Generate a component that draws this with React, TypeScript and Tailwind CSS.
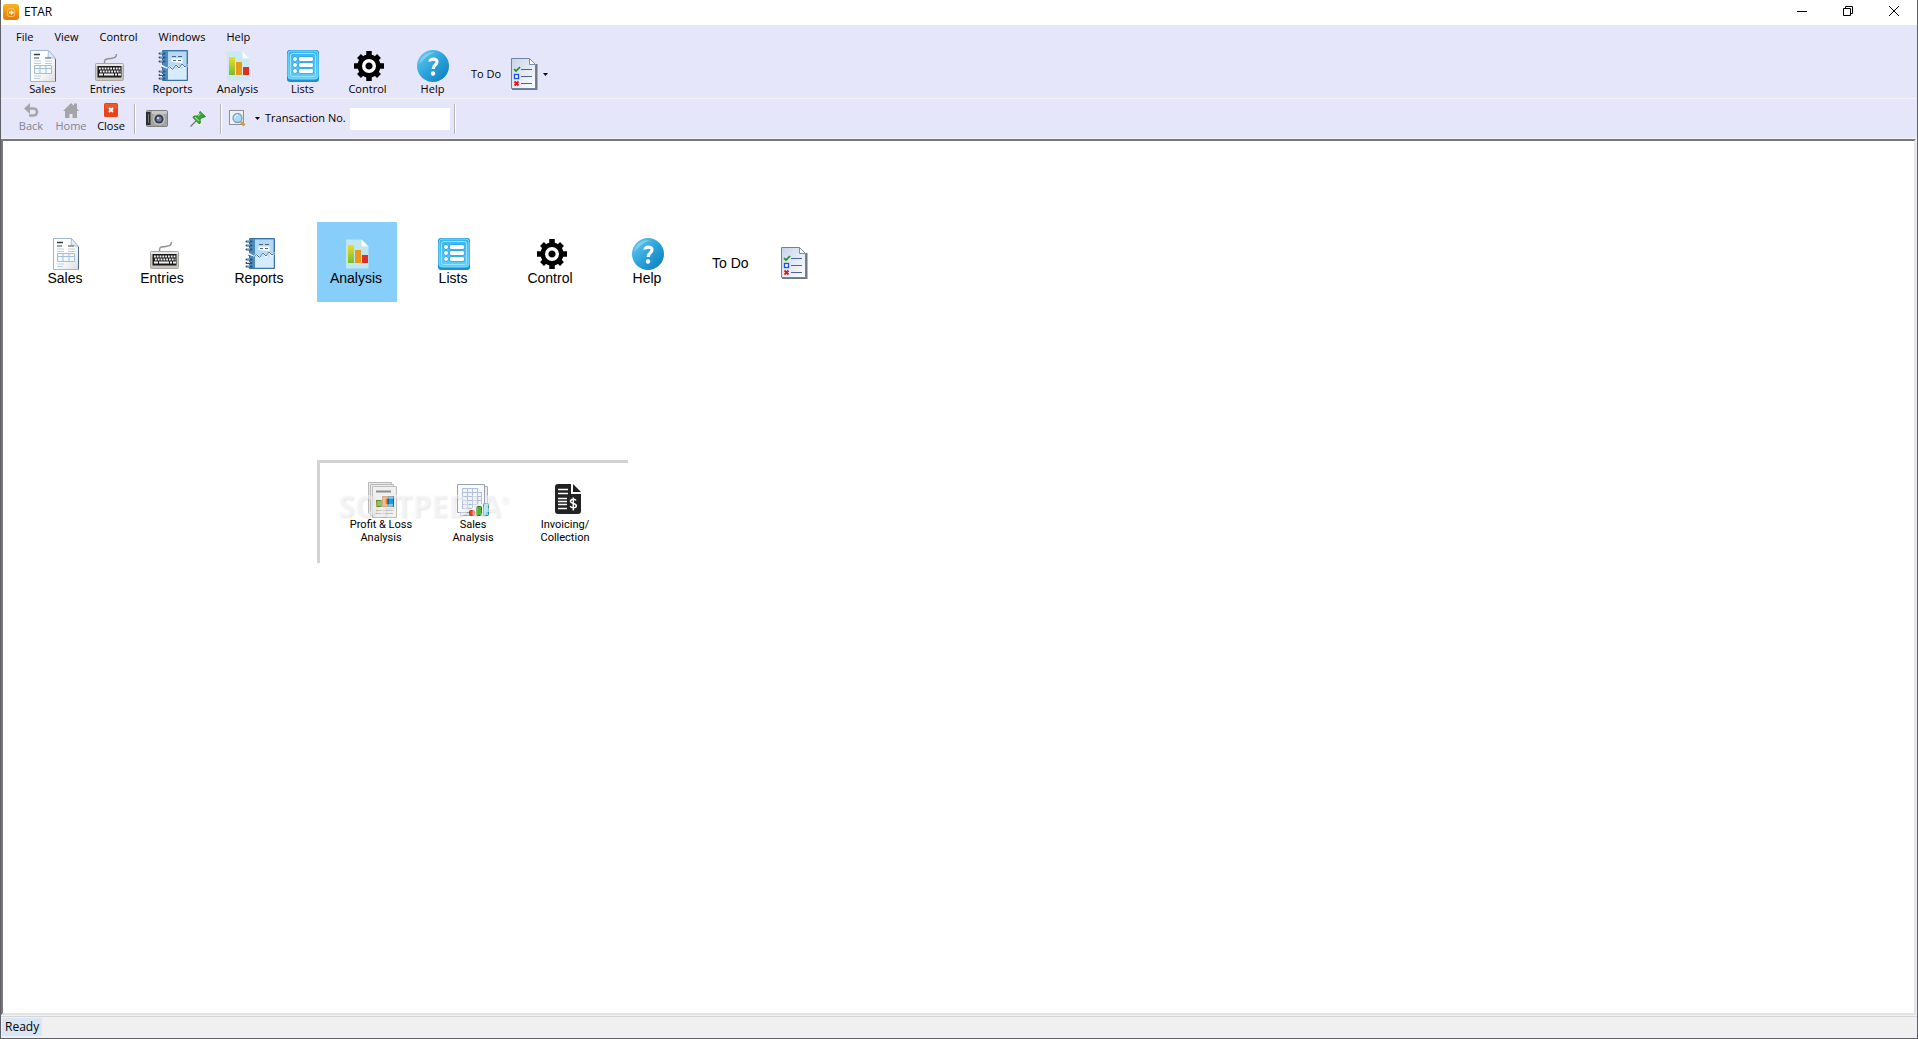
import type { ReactNode } from "react";
import clsx from "clsx";

function AppLogo() {
  return (
    <svg width="16" height="16" viewBox="0 0 16 16">
      <defs>
        <linearGradient id="logo" x1="0" y1="0" x2="0" y2="1">
          <stop offset="0" stopColor="#f7b61c" />
          <stop offset="1" stopColor="#e8780a" />
        </linearGradient>
      </defs>
      <rect width="16" height="16" rx="3" fill="url(#logo)" />
      <rect x="4.500" y="4.500" width="7" height="8" rx="2" fill="none" stroke="#fbd08a" strokeOpacity="0.700" />
      <path d="M6 7.500h2V6l3 2.500L8 11V9.500H6z" fill="#fff" fillOpacity="0.900" />
    </svg>
  );
}

function SalesIcon() {
  return (
    <svg width="32" height="32" viewBox="0 0 32 32">
      <defs>
        <linearGradient id="sales" x1="0" y1="0" x2="1" y2="1">
          <stop offset="0.5" stopColor="#fff" />
          <stop offset="1" stopColor="#dcdcdf" />
        </linearGradient>
      </defs>
      <path d="M3.500 .5h18l7 8v23h-25z" fill="url(#sales)" stroke="#9db5cf" />
      <path d="M28.500 9v22.500" stroke="#4f6a90" />
      <path d="M21.500 .5l-.5 6.500 7.500 1.500z" fill="#e4edf6" stroke="#a9bfd4" />
      <path d="M7 4.500h6" stroke="#333a44" strokeWidth="1.500" />
      <path d="M7 8h5M18 8h6" stroke="#7e8791" strokeWidth="1.500" />
      <path d="M7 11h7M18 11h7M7 13.500h7M18 13.500h7M7 26h7M7 28.500h6" stroke="#bccbdb" />
      <path d="M7.500 15.500h17v8h-17zM13 16v7.500M19 16v7.500M7.500 18.500h17" fill="#f2f7fb" stroke="#a3bfd6" />
    </svg>
  );
}

function EntriesIcon() {
  return (
    <svg width="32" height="32" viewBox="0 0 32 32">
      <path d="M12.500 14c-.5-6 2-5 6-5.500S24 8 24.500 4" fill="none" stroke="#8f8f8f" strokeWidth="1.500" />
      <rect x="3.500" y="13.500" width="28" height="17" rx="1" fill="#c9c6c0" stroke="#aaa7a2" />
      <rect x="4" y="14" width="27" height="2" fill="#e9e7e3" />
      <rect x="5.500" y="16" width="24" height="11.500" fill="#1c1c1c" />
      <path d="M7 18.500h21.500" stroke="#f3f3f3" strokeWidth="1.800" strokeDasharray="1.800 1" />
      <path d="M8 21.500h20.500" stroke="#f3f3f3" strokeWidth="1.800" strokeDasharray="1.800 1" />
      <path d="M7 24.500h4M12 24.500h10M23 24.500h2M26 24.500h3" stroke="#f3f3f3" strokeWidth="1.800" />
    </svg>
  );
}

function ReportsIcon() {
  return (
    <svg width="32" height="32" viewBox="0 0 32 32">
      <path d="M5.500 .5h25v30h-25z" fill="#4d8cc0" stroke="#3973a8" />
      <path d="M11 1.500h18.500v28H11z" fill="#b5d9f5" />
      <path d="M11 19l18.500-1v11.500H11z" fill="#d6ebfb" />
      <path d="M14.500 12V8.500h11V13z" fill="#fff" />
      <path d="M15 6.500h4M21 6.500h4M16 10.500h3M21 10.500h3" stroke="#4b6380" />
      <path d="M4.500 14.500l5 3 3-2 3 3 3.500-4.500 3 3 3-3.500 3 3 3-2.500v2l-3 3-3-3-3 3.500-3-3-3.500 4-3-3-3 2-5-3z" fill="#fff" />
      <path d="M4 17l5.500 2 3-2.500 3 3 3.500-4.500 3 3 3-4 3 3 3-2" fill="none" stroke="#3c75ab" />
      <path d="M2.500 3.500h5M2.500 7.500h5M2.500 11.500h5M2.500 21.500h5M2.500 25h5M2.500 28.500h5" stroke="#27547c" strokeWidth="2" strokeLinecap="round" />
      <path d="M3 3h3M3 7h3M3 11h3M3 21h3M3 24.500h3M3 28h3" stroke="#bfd5e6" />
    </svg>
  );
}

function AnalysisIcon() {
  return (
    <svg width="32" height="32" viewBox="0 0 32 32">
      <defs>
        <linearGradient id="bar1" x1="0" y1="0" x2="0" y2="1">
          <stop offset="0" stopColor="#f0dc28" />
          <stop offset="1" stopColor="#76bc2e" />
        </linearGradient>
      </defs>
      <path d="M5 1.500H20.500l7 7v22H5z" fill="#c6e9ee" fillOpacity="0.900" />
      <path d="M20.500 1.500V8.500h7z" fill="#f7fdfe" />
      <rect x="7" y="7" width="6" height="18" fill="url(#bar1)" />
      <rect x="14" y="12" width="6" height="13" fill="#e99a1c" />
      <rect x="21" y="17" width="6" height="8" fill="#dd2f25" />
    </svg>
  );
}

function ListsIcon() {
  return (
    <svg width="32" height="32" viewBox="0 0 32 32">
      <defs>
        <linearGradient id="lists" x1="0" y1="0" x2="0" y2="1">
          <stop offset="0" stopColor="#38b6f7" />
          <stop offset="1" stopColor="#5bd0ff" />
        </linearGradient>
      </defs>
      <rect width="32" height="32" rx="3" fill="#1c91d0" />
      <rect x="1" y="1" width="30" height="28" rx="3" fill="url(#lists)" stroke="#7cdbff" />
      <rect x="3.500" y="3.500" width="25" height="23" rx="2" fill="none" stroke="#9be2ff" />
      <path d="M13.500 9h11M13.500 15h11M13.500 21h11" stroke="#2b98d6" strokeWidth="5" strokeLinecap="round" />
      <g fill="#2b98d6">
        <circle cx="8" cy="9" r="2.500" />
        <circle cx="8" cy="15" r="2.500" />
        <circle cx="8" cy="21" r="2.500" />
      </g>
      <path d="M13.500 9h11M13.500 15h11M13.500 21h11" stroke="#fff" strokeWidth="3.800" strokeLinecap="round" />
      <g fill="#fff">
        <circle cx="8" cy="9" r="2" />
        <circle cx="8" cy="15" r="2" />
        <circle cx="8" cy="21" r="2" />
      </g>
    </svg>
  );
}

function ControlIcon() {
  return (
    <svg width="32" height="32" viewBox="0 0 32 32">
      <g transform="translate(17 16)">
        <g stroke="#000" strokeWidth="5.500">
          <path d="M0-15V15M-15 0H15" />
          <path d="M-10-10L10 10M10-10L-10 10" />
        </g>
        <circle r="11.500" />
        <circle r="5.300" fill="none" stroke="#fff" strokeWidth="3.400" />
      </g>
    </svg>
  );
}

function HelpIcon() {
  return (
    <svg width="32" height="32" viewBox="0 0 32 32">
      <defs>
        <linearGradient id="help" x1="0" y1="0" x2="1" y2="1">
          <stop offset="0" stopColor="#6fcdf0" />
          <stop offset="0.500" stopColor="#2ba3da" />
          <stop offset="1" stopColor="#0c78bd" />
        </linearGradient>
      </defs>
      <circle cx="16" cy="16" r="16" fill="url(#help)" />
      <path d="M2 14C4 5 10 2 18 2C11 5 7 9 2 14z" fill="#9adcf4" fillOpacity="0.600" />
      <path d="M13 11.500c-.3-3 7-3.500 7 .2 0 3.300-3.800 3.300-3.800 7.300" fill="none" stroke="#fff" strokeWidth="3.200" />
      <circle cx="16" cy="23.500" r="2.200" fill="#fff" />
    </svg>
  );
}

function ToDoIcon() {
  return (
    <svg width="27" height="32" viewBox="0 0 27 32">
      <defs>
        <linearGradient id="todo" x1="0" y1="0" x2="1" y2="1">
          <stop offset="0" stopColor="#c6d4e8" />
          <stop offset="1" stopColor="#fff" />
        </linearGradient>
      </defs>
      <path d="M1 31h24.500V6" fill="none" stroke="#6f7889" strokeWidth="2" />
      <path d="M.5 .5h18l6 6v24H.5z" fill="url(#todo)" stroke="#6d83a5" />
      <path d="M18.500 .5v6h6z" fill="#fff" stroke="#7e8ea8" />
      <path d="M3 11l2 2 4-4" fill="none" stroke="#1d8a2c" strokeWidth="1.700" />
      <path d="M10 11.500h11M10 18.500h11M10 25.500h11" stroke="#466795" />
      <rect x="3.500" y="16.500" width="4" height="4" fill="#fff" stroke="#1c4df0" strokeWidth="1.300" />
      <path d="M3.500 23.500l4 4M7.500 23.500l-4 4" stroke="#e3131d" strokeWidth="1.800" />
    </svg>
  );
}

function CameraIcon() {
  return (
    <svg width="22" height="17" viewBox="0 0 22 17">
      <rect x=".5" y=".5" width="21" height="16" rx="1" fill="#a3a3a4" stroke="#808082" />
      <rect x="6" y="1" width="15" height="3" fill="#c8c8c8" />
      <path d="M0 2h4.500v13H0z" fill="#2e2e2e" />
      <path d="M2.500 4v9" stroke="#777" />
      <circle cx="13" cy="9" r="6" fill="#c4c4c5" />
      <circle cx="13" cy="9" r="4.600" fill="#3a3c48" />
      <circle cx="13" cy="9" r="2.600" fill="#727da6" />
      <circle cx="12" cy="8" r="1" fill="#e8ecff" />
    </svg>
  );
}

function PinIcon() {
  return (
    <svg width="16" height="16" viewBox="0 0 16 16">
      <path d="M6 10L.5 15.500" stroke="#777" strokeWidth="1.300" />
      <path d="M10 .5l5.500 5-2 1-2 .3-1.500 2 .5 3-1.500 1L3 6.500l1-1.500h3l2.300-1.800z" fill="#36a336" stroke="#1d7a24" strokeWidth=".8" />
      <path d="M10.500 2.500L8 5M5 6l4 4" stroke="#8fe07c" strokeWidth="1.200" />
    </svg>
  );
}

function FindIcon() {
  return (
    <svg width="17" height="17" viewBox="0 0 17 17">
      <rect x=".5" y=".5" width="14" height="14" fill="#f1f2f6" stroke="#333" strokeDasharray="1 1" />
      <path d="M12 12l3.500 3.500" stroke="#d59a4c" strokeWidth="3" />
      <circle cx="8.500" cy="8" r="4.500" fill="#a8dbf6" stroke="#7f9fb5" strokeWidth="1.300" />
      <path d="M6 8c0-2 1-3 3-3" fill="none" stroke="#fff" />
    </svg>
  );
}

function BackIcon() {
  return (
    <svg width="15" height="15" viewBox="0 0 15 15">
      <path d="M4 5.500h5.500a3.500 3.500 0 0 1 0 7H5" fill="none" stroke="#a5a5a8" strokeWidth="2.600" />
      <path d="M6 0v11L0 5.500z" fill="#a5a5a8" />
    </svg>
  );
}

function HomeIcon() {
  return (
    <svg width="16" height="15" viewBox="0 0 16 15">
      <path d="M8 0l3 2.800V.5h3v5L16 8h-2v7H9.500v-4h-3v4H2V8H0z" fill="#a5a5a8" />
    </svg>
  );
}

function CloseIcon() {
  return (
    <svg width="15" height="15" viewBox="0 0 15 15">
      <rect width="14" height="14" rx="1.500" fill="#e8431a" />
      <rect x="1" y="1" width="12" height="5" rx="1" fill="#ee5727" />
      <path d="M5 5l4 4M9 5L5 9" stroke="#fff" strokeWidth="2" />
    </svg>
  );
}

function ProfitLossIcon() {
  return (
    <svg width="32" height="36" viewBox="0 0 32 36">
      <path d="M3.500 .5h23v31h-23z" fill="#e9e9e9" stroke="#b9b9b9" />
      <path d="M5.500 2.500h23v31h-23z" fill="#ededed" stroke="#b9b9b9" />
      <path d="M7.500 4.500h24v31h-24z" fill="#f0f0f0" stroke="#bdbdbd" />
      <path d="M11 9.500h15" stroke="#8f8f8f" strokeWidth="2" />
      <rect x="11.500" y="18.500" width="5" height="6" fill="#8fc653" stroke="#5f8f2c" />
      <rect x="17.500" y="14.500" width="5" height="10" fill="#f58c23" stroke="#b9590c" />
      <rect x="23.500" y="14.500" width="5" height="10" fill="#1c9fe4" stroke="#0a68a3" />
      <path d="M11 28.500h17M11 31.500h17" stroke="#c2c2c2" />
    </svg>
  );
}

function SalesAnalysisIcon() {
  return (
    <svg width="32" height="32" viewBox="0 0 32 32">
      <path d="M3.500 2.500h27v29h-27z" fill="#ececf0" stroke="#a9abb8" />
      <path d="M.5 .5h27v28H.5z" fill="#fafbfd" stroke="#9aa0b2" />
      <path d="M5 4.500h19v20H5z" fill="#f0f4fb" />
      <path d="M5 4.500h15M5 8.500h19M5 12.500h19M5 16.500h19M5 20.500h15M5 24.500h10M5.500 4v20M10.500 4v20M15.500 4v20M20.500 4v16M24.500 8v12" stroke="#b4c0d8" />
      <rect x="12.500" y="26.500" width="5" height="5" rx="1" fill="#ee4a10" stroke="#b93a10" />
      <rect x="19.500" y="22.500" width="5" height="9" rx="1" fill="#54b432" stroke="#25741a" />
      <rect x="26.500" y="19.500" width="5" height="12" rx="1" fill="#84e3f0" stroke="#1b96b2" />
    </svg>
  );
}

function InvoiceIcon() {
  return (
    <svg width="32" height="32" viewBox="-6 0 32 32">
      <path d="M3 0h13v10h10v17a3 3 0 0 1-3 3H3a3 3 0 0 1-3-3V3a3 3 0 0 1 3-3z" fill="#222" />
      <path d="M18 0l8 8h-8z" fill="#222" />
      <path d="M3 5.500h10M3 9.500h10M3 14.500h9M3 17.500h9M3 20.500h9M3 24.500h9" stroke="#fff" strokeWidth="1.300" />
      <path d="M21 16.500c-1-2-5.500-1.500-5.500 1s5.800 1.500 5.800 4.300c0 2.500-5 2.700-6.100.2M18.300 13.500v13" fill="none" stroke="#fff" strokeWidth="1.500" />
    </svg>
  );
}

const modules = [
  { name: "Sales", icon: SalesIcon },
  { name: "Entries", icon: EntriesIcon },
  { name: "Reports", icon: ReportsIcon },
  { name: "Analysis", icon: AnalysisIcon },
  { name: "Lists", icon: ListsIcon },
  { name: "Control", icon: ControlIcon },
  { name: "Help", icon: HelpIcon },
];

const analysisItems = [
  { lines: ["Profit & Loss", "Analysis"], icon: <ProfitLossIcon /> },
  { lines: ["Sales", "Analysis"], icon: <SalesAnalysisIcon /> },
  { lines: ["Invoicing/", "Collection"], icon: <InvoiceIcon /> },
];

function Caret() {
  return (
    <svg width="5" height="3" viewBox="0 0 5 3">
      <path d="M0 0h5L2.500 3z" />
    </svg>
  );
}

function Divider() {
  return <div className="h-[30px] w-[2px] border-l border-[#b4b4b4] bg-white" />;
}

function NavButton({ label, icon, disabled }: { label: string; icon: ReactNode; disabled?: boolean }) {
  return (
    <button
      disabled={disabled}
      className="flex w-10 flex-col items-center leading-4 disabled:text-[#838389]"
    >
      {icon}
      {label}
    </button>
  );
}

function TitleBar() {
  return (
    <header className="flex h-[25px] items-start justify-between bg-white pl-[2px]">
      <div className="flex h-6 items-center gap-[5px] text-[12px]">
        <AppLogo />
        <h1>ETAR</h1>
      </div>
      <div className="flex">
        <button aria-label="Minimize" className="flex h-[22px] w-[46px] items-center justify-center">
          <svg width="10" height="10" viewBox="0 0 10 10" stroke="#000">
            <path d="M0 5.500h10" />
          </svg>
        </button>
        <button aria-label="Restore" className="flex h-[22px] w-[46px] items-center justify-center">
          <svg width="10" height="10" viewBox="0 0 10 10" fill="none" stroke="#000">
            <path d="M.5 2.500h7v7h-7zM2.500 2V.5h7v7H8" />
          </svg>
        </button>
        <button aria-label="Close window" className="flex h-[22px] w-[46px] items-center justify-center">
          <svg width="10" height="10" viewBox="0 0 10 10" stroke="#000">
            <path d="M0 0l10 10M10 0L0 10" />
          </svg>
        </button>
      </div>
    </header>
  );
}

function Toolbars() {
  return (
    <div className="border-b border-[#f3f3f3] bg-[#e6e6fa]">
      <nav className="flex h-6 items-center gap-[21px] pl-[15px]">
        {["File", "View", "Control", "Windows", "Help"].map((item) => (
          <button key={item}>{item}</button>
        ))}
      </nav>

      <div className="flex h-[50px] items-start border-b border-[#f3f3f3] pt-px pl-[9px]">
        {modules.map(({ name, icon: Icon }) => (
          <button key={name} className="flex w-[65px] flex-col items-center leading-[14px]">
            <Icon />
            {name}
          </button>
        ))}
        <button className="flex items-center gap-[5px] pt-2 pl-[6px]">
          <span className="pr-[5px]">To Do</span>
          <ToDoIcon />
          <Caret />
        </button>
      </div>

      <div className="flex h-[39px] items-center pl-[10px]">
        <NavButton label="Back" icon={<BackIcon />} disabled />
        <NavButton label="Home" icon={<HomeIcon />} disabled />
        <NavButton label="Close" icon={<CloseIcon />} />
        <div className="pl-[3px]">
          <Divider />
        </div>
        <button aria-label="Snapshot" className="pl-[10px]">
          <CameraIcon />
        </button>
        <button aria-label="Pin" className="pr-[14px] pl-[22px]">
          <PinIcon />
        </button>
        <Divider />
        <button aria-label="Search by" className="flex items-center gap-[9px] pr-[5px] pl-[7px]">
          <FindIcon />
          <Caret />
        </button>
        <label htmlFor="transaction" className="w-[85px] whitespace-nowrap">
          Transaction No.
        </label>
        <input id="transaction" className="mr-1 h-[22px] w-[100px] bg-white px-1 outline-none" />
        <Divider />
      </div>
    </div>
  );
}

function AnalysisPanel() {
  return (
    <section className="relative mt-[158px] ml-[314px] flex h-[103px] w-[311px] border-t-[3px] border-l-[3px] border-[#d3d3d3] pt-[19px] pl-[15px]">
      {analysisItems.map(({ lines, icon }) => (
        <button
          key={lines.join(" ")}
          className="flex w-[92px] flex-col items-center font-[Roboto,sans-serif] text-[11px] leading-[13px]"
        >
          <span className="flex h-9 items-center">{icon}</span>
          {lines.map((line) => (
            <span key={line}>{line}</span>
          ))}
        </button>
      ))}
      <div className="pointer-events-none absolute top-[31px] left-[18px] flex h-6 items-start font-['Open_Sans',sans-serif] text-[30px] leading-6 font-bold text-white/50 [text-shadow:1px_1px_2px_rgb(0_0_0/0.10)]">
        SOFTPEDIA
        <span className="text-[10px] leading-3">®</span>
      </div>
    </section>
  );
}

export default function App() {
  return (
    <div className="flex min-h-screen flex-col border-x border-b border-[#5f5f66] bg-[#f0f0f0] font-['Open_Sans','Noto_Sans',sans-serif] text-[11px] text-black">
      <TitleBar />
      <Toolbars />
      <main className="mr-px flex-1 border-t-2 border-r-2 border-b-2 border-l-2 border-t-[#77777c] border-r-[#e3e3e3] border-b-[#e3e3e3] border-l-[#77777c] bg-white pt-[81px] font-['Liberation_Sans',Arial,sans-serif]">
        <div className="flex gap-[17px] pl-[23px] text-[14px] leading-4">
          {modules.map(({ name, icon: Icon }) => (
            <button
              key={name}
              className={clsx(
                "flex size-20 flex-col items-center pt-4",
                name === "Analysis" && "bg-[#87cefa]",
              )}
            >
              <Icon />
              <span className="pr-[2px]">{name}</span>
            </button>
          ))}
          <button className="flex items-center gap-8 pt-[2px] pl-[7px]">
            To Do
            <ToDoIcon />
          </button>
        </div>
        <AnalysisPanel />
      </main>
      <footer className="mt-px flex h-[22px] items-start border-t border-[#d5d5d5] pt-px pl-px">
        <span className="bg-[#d9e6f5] px-[3px] text-[12px] leading-[18px]">Ready</span>
      </footer>
    </div>
  );
}
